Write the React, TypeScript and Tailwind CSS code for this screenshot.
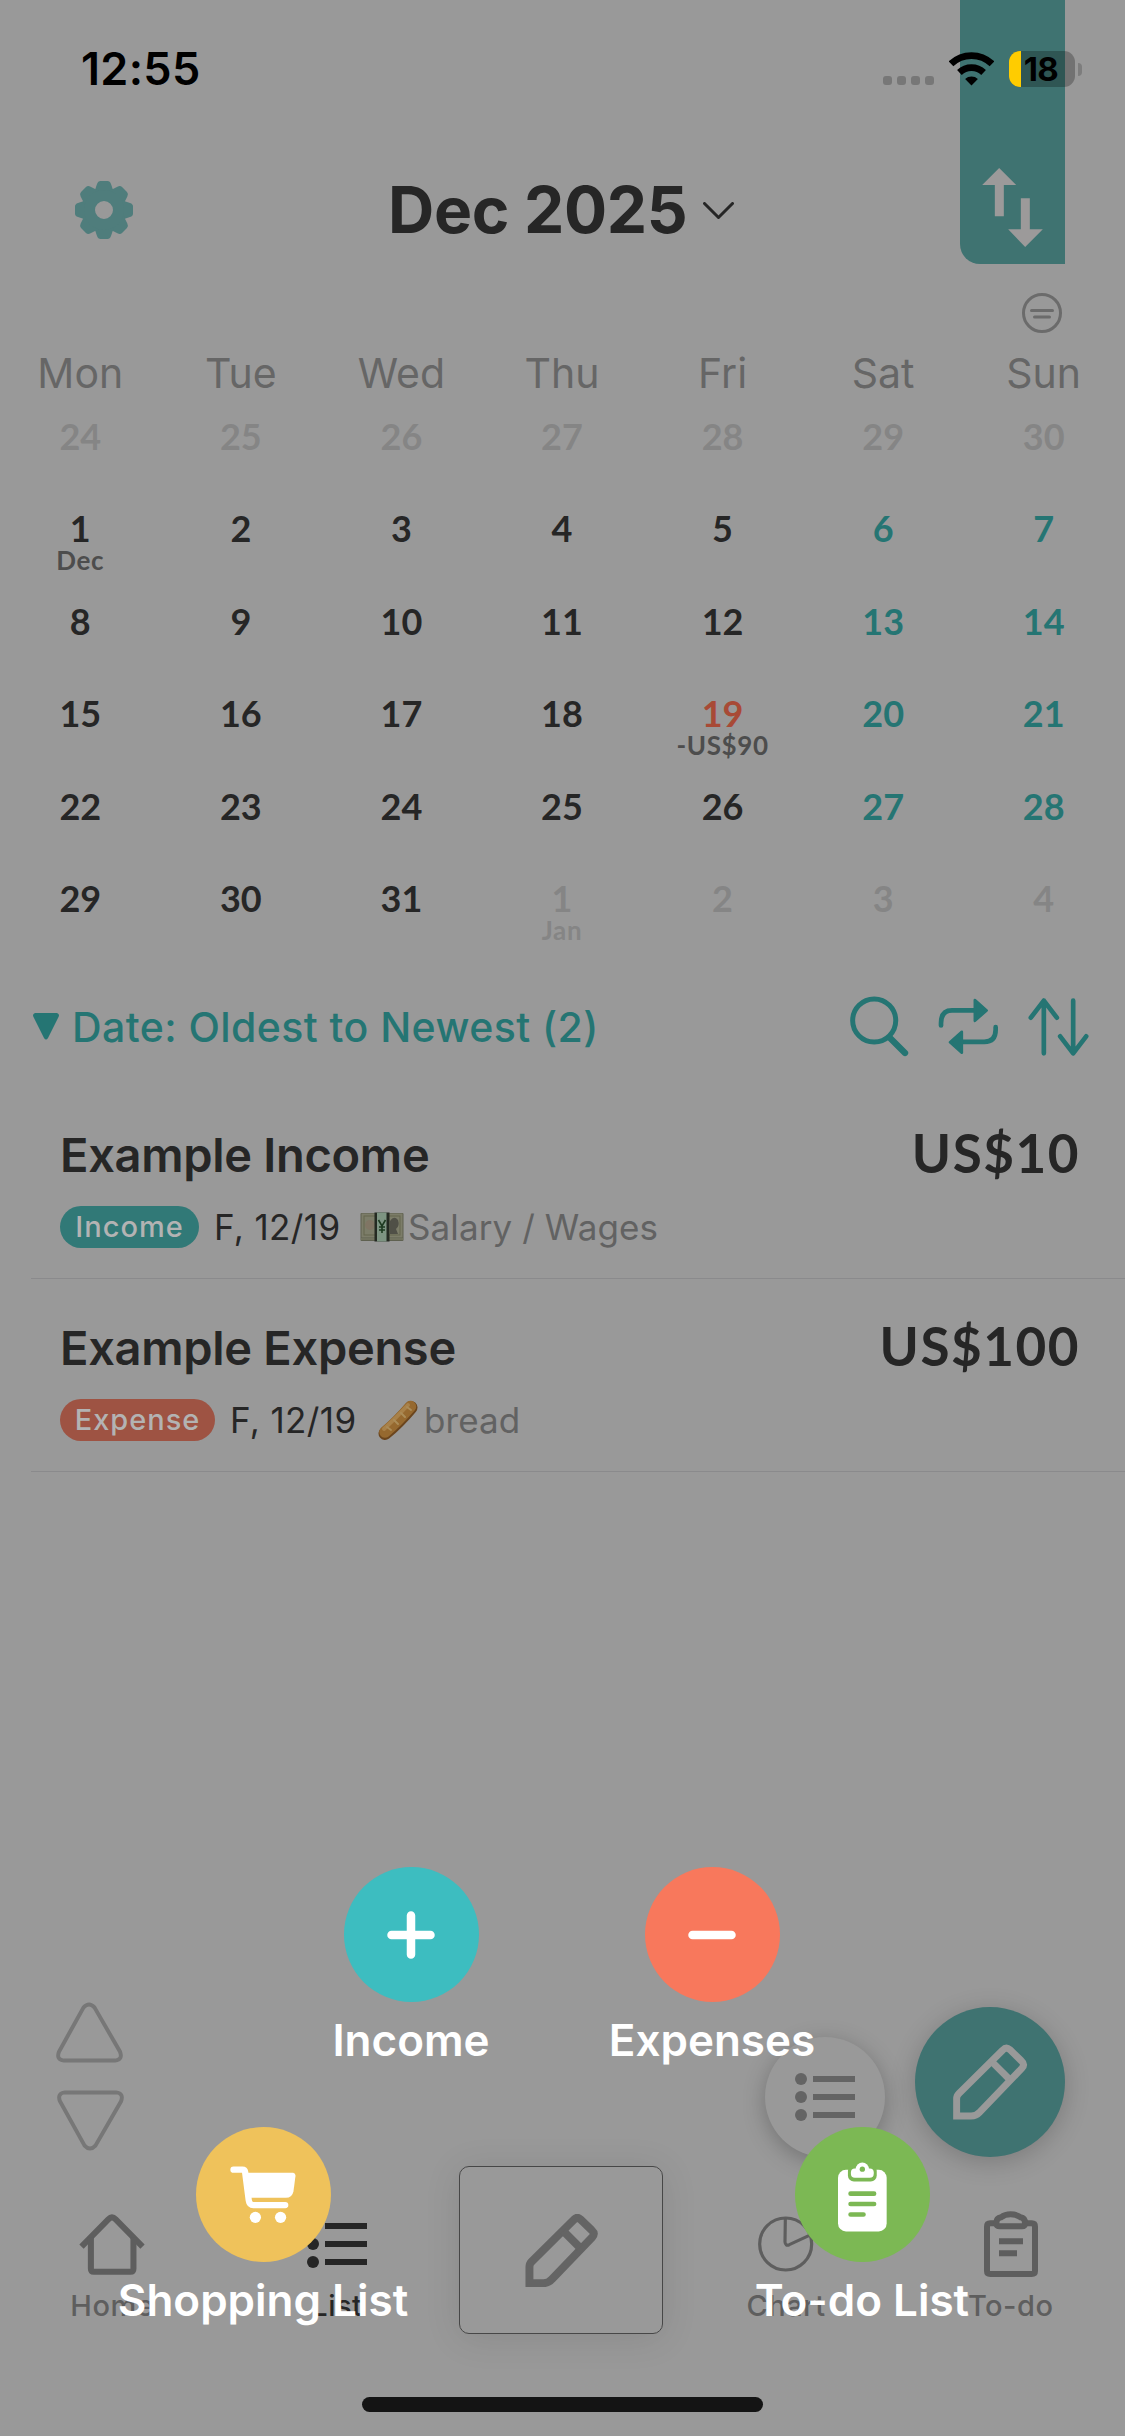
import React from "react";

const weekdays = ["Mon", "Tue", "Wed", "Thu", "Fri", "Sat", "Sun"];

function App() {
  return (
    <div className="relative flex h-[2436px] w-[1125px] flex-col overflow-hidden bg-[#999999] font-[Inter,'Liberation_Sans',sans-serif] text-[#262626]">
      <SwapTab />
      <StatusBar />
      <Header />
      <Calendar />
      <SortBar />
      <div className="flex flex-col pl-[31px]">
        {records.map((record) => (
          <RecordRow key={record.title} record={record} />
        ))}
      </div>
      <div className="flex-1" />
      <TabBar />
      <FloatingButtons />
      <AddMenu />
    </div>
  );
}

function SwapTab() {
  return (
    <div className="absolute left-[960px] top-0 h-[264px] w-[105px] rounded-bl-[20px] bg-[#3f7371] pl-[22px] pt-[168px]">
      <svg width="61" height="79" viewBox="487 503 182 237" fill="#9c9a9a">
        <path d="M538 503L589 554H552V648H525V554H487Z" />
        <path d="M603 594H630V687H669L616 740L565 687H603Z" />
      </svg>
    </div>
  );
}

function StatusBar() {
  return (
    <div className="relative flex h-[140px] shrink-0 justify-between pl-[81px] pr-[43px] text-black">
      <div className="pt-[39px] text-[45px] font-semibold leading-[60px] tracking-[0.3px]">
        12:55
      </div>
      <div className="flex pt-[51px]">
        <div className="mr-[15px] flex gap-[5px] pt-[25px]">
          <div className="h-[9px] w-[9px] rounded-[3px] bg-[#777777]" />
          <div className="h-[9px] w-[9px] rounded-[3px] bg-[#777777]" />
          <div className="h-[9px] w-[9px] rounded-[3px] bg-[#777777]" />
          <div className="h-[9px] w-[9px] rounded-[3px] bg-[#777777]" />
        </div>
        <svg
          className="mr-[15px] mt-px"
          width="45"
          height="34"
          viewBox="386 155 134 101"
          fill="none"
          stroke="#000"
          strokeWidth="20"
        >
          <path d="M392 190A88 88 0 0 1 514 190" />
          <path d="M417 216A52 52 0 0 1 489 216" />
          <path d="M453 255L434 235A28 28 0 0 1 472 235Z" fill="#000" stroke="none" />
        </svg>
        <div className="flex h-[36px] w-[66px] rounded-[11px] bg-black/25">
          <div className="w-[12px] rounded-l-[11px] bg-[#ffcc00]" />
          <div className="w-[40px] text-center text-[33px] font-bold leading-[37px] tracking-[-0.5px]">
            18
          </div>
        </div>
        <div className="ml-[3px] mt-[12px] h-[13px] w-[4px] rounded-r-full bg-[#7d7d7d]" />
      </div>
    </div>
  );
}

function Header() {
  return (
    <>
      <div className="flex h-[138px] shrink-0 items-center pl-[75px] pt-[2px]">
        <svg width="58" height="58" viewBox="-29 -29 58 58" fill="#4f7d7c">
          {[0, 45, 90, 135, 180, 225, 270, 315].map((angle) => (
            <path
              key={angle}
              transform={`rotate(${angle})`}
              d="M-10 -17L-7 -26Q-6 -29 -3.5 -29H3.5Q6 -29 7 -26L10 -17Z"
            />
          ))}
          <path
            fillRule="evenodd"
            d="M0 -20A20 20 0 1 1 0 20A20 20 0 1 1 0 -20ZM0 -9A9 9 0 1 0 0 9A9 9 0 1 0 0 -9Z"
          />
        </svg>
        <div className="ml-[255px] text-[64px] font-bold leading-[72px] tracking-[-0.3px]">
          Dec 2025
        </div>
        <svg
          className="ml-[16px] mt-[2px]"
          width="31"
          height="18"
          viewBox="0 0 31 18"
          fill="none"
          stroke="#262626"
          strokeWidth="3"
          strokeLinecap="round"
          strokeLinejoin="round"
        >
          <path d="M1.5 1.5L15.5 15.5L29.5 1.5" />
        </svg>
      </div>
      <div className="flex h-[70px] shrink-0 items-center justify-end pr-[63px]">
        <svg
          width="40"
          height="40"
          viewBox="0 0 40 40"
          fill="none"
          stroke="#6b6b6b"
          strokeWidth="3"
          strokeLinecap="round"
        >
          <circle cx="20" cy="20" r="18.5" />
          <path d="M9.5 17.5H30.5M12.5 24H27.5" />
        </svg>
      </div>
    </>
  );
}

type Day = { day: number; note?: string; tone?: "faint" | "weekend" | "today" };

const toneClass = {
  normal: "text-[#262626]",
  faint: "text-[#858585]",
  weekend: "text-[#257573]",
  today: "text-[#a84a36]",
};

const days: Day[] = [
  ...[24, 25, 26, 27, 28, 29, 30].map((day) => ({ day, tone: "faint" as const })),
  ...Array.from({ length: 31 }, (_, i): Day => {
    const day = i + 1;
    if (day === 1) return { day, note: "Dec" };
    if (day === 19) return { day, note: "-US$90", tone: "today" };
    return { day, tone: i % 7 > 4 ? "weekend" : undefined };
  }),
  { day: 1, note: "Jan", tone: "faint" },
  { day: 2, tone: "faint" },
  { day: 3, tone: "faint" },
  { day: 4, tone: "faint" },
];

function Calendar() {
  return (
    <div className="shrink-0 pr-px">
      <div className="grid h-[51px] grid-cols-7 text-center text-[41px] leading-[51px] text-[#666666]">
        {weekdays.map((name) => (
          <div key={name}>{name}</div>
        ))}
      </div>
      <div className="grid grid-cols-7 text-center font-[Lato,'Liberation_Sans',sans-serif] font-bold">
        {days.map((d, index) => (
          <div key={index} className="h-[92.6px] pt-[18.5px]">
            <div
              className={`text-[36px] leading-[36px] ${toneClass[d.tone || "normal"]}`}
            >
              {d.day}
            </div>
            {d.note && (
              <div
                className={`text-[26px] leading-[28px] tracking-[0.6px] ${
                  d.tone === "faint" ? "text-[#858585]" : "text-[#4d4d4d]"
                }`}
              >
                {d.note}
              </div>
            )}
          </div>
        ))}
      </div>
    </div>
  );
}

function SortBar() {
  return (
    <div className="flex h-[131px] shrink-0 items-center pl-[33px] pr-[36px] pt-[13px] text-[#257573]">
      <svg width="26" height="27" viewBox="0 0 26 27" fill="currentColor">
        <path d="M2 0H24Q27 1 25.5 4L15 25Q13 28 11 25L0.5 4Q-1 1 2 0Z" />
      </svg>
      <div className="ml-[13px] text-[41px] font-medium leading-[50px] tracking-[0.43px]">
        Date: Oldest to Newest (2)
      </div>
      <div className="ml-auto flex items-center gap-[29px]">
        <svg width="59" height="61" viewBox="745 106 176 184" fill="none" stroke="currentColor">
          <circle cx="817" cy="180" r="65" strokeWidth="15" />
          <path d="M864 232L910 278" strokeWidth="19" strokeLinecap="round" />
        </svg>
        <svg
          width="61"
          height="57"
          viewBox="1010 115 182 170"
          fill="none"
          stroke="currentColor"
          strokeLinecap="round"
          strokeLinejoin="round"
        >
          <path d="M1019 197V190Q1019 152 1052 152H1118M1182 202V210Q1182 246 1148 246H1084" strokeWidth="14" />
          <path d="M1120 121L1155 152L1120 183ZM1081 216L1046 247L1081 278Z" fill="currentColor" strokeWidth="8" />
        </svg>
        <svg
          width="61"
          height="58"
          viewBox="1280 114 182 174"
          fill="none"
          stroke="currentColor"
          strokeWidth="14"
          strokeLinecap="round"
          strokeLinejoin="round"
        >
          <path d="M1327 122V280M1288 173L1327 122L1366 173" />
          <path d="M1415 122V280M1376 229L1415 280L1454 229" />
        </svg>
      </div>
    </div>
  );
}

const records = [
  {
    title: "Example Income",
    amount: "US$10",
    kind: "Income",
    badge: "w-[139px] bg-[#317977]",
    date: "F, 12/19",
    category: "Salary / Wages",
    icon: <MoneyIcon />,
  },
  {
    title: "Example Expense",
    amount: "US$100",
    kind: "Expense",
    badge: "w-[155px] bg-[#9e5343]",
    date: "F, 12/19",
    category: "bread",
    icon: <BreadIcon />,
  },
];

function RecordRow({ record }: { record: (typeof records)[0] }) {
  return (
    <div className="flex h-[193px] justify-between border-b border-[#8a8a8c] pl-[29px] pr-[45px] pt-[45px]">
      <div>
        <div className="text-[47px] font-semibold leading-[48px] tracking-[-0.3px]">
          {record.title}
        </div>
        <div className="mt-[27px] flex h-[42px] items-center">
          <div
            className={`h-[42px] rounded-full text-center text-[29px] font-medium leading-[42px] tracking-[1px] text-[#b3b3b3] ${record.badge}`}
          >
            {record.kind}
          </div>
          <div className="ml-[15px] w-[146px] whitespace-nowrap text-[35px] leading-[42px] tracking-[0.4px]">
            {record.date}
          </div>
          {record.icon}
          <div className="ml-[4px] whitespace-nowrap text-[35px] leading-[42px] tracking-[0.1px] text-[#626262]">
            {record.category}
          </div>
        </div>
      </div>
      <div className="font-[Lato,'Liberation_Sans',sans-serif] text-[53px] font-bold leading-[43px] tracking-[1.5px]">
        {record.amount}
      </div>
    </div>
  );
}

function MoneyIcon() {
  return (
    <svg width="44" height="30" viewBox="0 0 44 30">
      <rect x="0.5" y="1" width="43" height="28" rx="1" fill="#5f6150" />
      <rect x="1.5" y="1.5" width="41" height="24" fill="#7c7d69" />
      <rect x="4" y="4" width="36" height="19" fill="none" stroke="#64664f" strokeWidth="1" />
      <circle cx="10" cy="13" r="5" fill="#807564" />
      <path d="M30 22V9Q34 3 38 8Q40 14 36 17L38 22Z" fill="#505047" />
      <path d="M1 27H43" stroke="#85866f" strokeWidth="1" />
      <rect x="14.5" y="0.5" width="15" height="29" fill="#242a22" />
      <rect x="17" y="0.5" width="9.5" height="29" fill="#7d9482" />
      <path d="M18.5 8L22 14L25.5 8M22 14V21M19 15H25M19 18H25" stroke="#1d3a20" strokeWidth="1.6" fill="none" />
    </svg>
  );
}

function BreadIcon() {
  return (
    <svg width="44" height="42" viewBox="0 0 44 42" fill="none" strokeLinecap="round">
      <path d="M9 34.500Q22 24 35 8.500" stroke="#6b451d" strokeWidth="13" />
      <path d="M9 33Q21 23 34.500 7.500" stroke="#96692f" strokeWidth="11.500" />
      <path d="M8 30Q20 19 32 6" stroke="#a88149" strokeWidth="4" />
      <path d="M11 28L15 31M18 21L22 25M25 14L29 18M31 8L35 11" stroke="#ab8c58" strokeWidth="2" />
    </svg>
  );
}

function ListIcon() {
  return (
    <svg width="60" height="48" viewBox="0 0 60 48" fill="currentColor">
      <circle cx="6" cy="6" r="6" />
      <circle cx="6" cy="24" r="6" />
      <circle cx="6" cy="42" r="6" />
      <path d="M18 3H60V9H18ZM18 21H60V27H18ZM18 39H60V45H18Z" />
    </svg>
  );
}

function PencilIcon({ size, stroke }: { size: number; stroke: number }) {
  return (
    <svg
      width={size}
      height={size}
      viewBox="636 191 228 230"
      fill="none"
      stroke="currentColor"
      strokeWidth={stroke}
    >
      <path d="M649 409V357Q649 348 656 341L788 210Q799 198 810 208L845 242Q857 253 846 265L719 397Q708 409 693 409Z" />
      <path d="M756 245L808 297" />
    </svg>
  );
}

function TabBar() {
  return (
    <div className="shrink-0">
      <div className="flex h-[231px] pr-[2px] text-[#5e5e5e]">
        <TabItem label="Home">
          <svg width="66" height="61" viewBox="117 281 196 182" fill="none" stroke="currentColor" strokeWidth="18">
            <path d="M124 378L204 297Q215 286 226 297L306 378" />
            <path d="M152 350V444Q152 453 161 453H270Q279 453 279 444V350" />
          </svg>
        </TabItem>
        <div className="flex flex-1 text-[#262626]">
          <TabItem label="List">
            <ListIcon />
          </TabItem>
        </div>
        <div className="flex-1">
          <div className="mx-auto flex h-[168px] w-[204px] items-center justify-center rounded-[10px] border-[1.5px] border-[#474747] text-[#646464] shadow-[0_4px_36px_rgba(0,0,0,0.1)]">
            <PencilIcon size={73} stroke={25} />
          </div>
        </div>
        <TabItem label="Chart">
          <svg width="56" height="56" viewBox="59 706 168 168" fill="none" stroke="currentColor" strokeWidth="9.5">
            <circle cx="142" cy="790" r="78" />
            <path d="M141 714L140 784Q141 797 153 792L218 762" />
          </svg>
        </TabItem>
        <TabItem label="To-do">
          <svg width="54" height="66" viewBox="735 692 162 198" fill="none" stroke="currentColor" strokeWidth="18">
            <path d="M774 729H754Q744 729 744 739V872Q744 881 754 881H878Q888 881 888 872V739Q888 729 878 729H856" />
            <path d="M783 738H849Q858 738 858 728Q858 713 845 711Q833 702 815 702Q798 702 786 711Q772 713 772 728Q772 738 783 738Z" />
            <path d="M780 783H852M780 819H834" />
          </svg>
        </TabItem>
      </div>
      <div className="mx-auto mb-[24px] h-[15px] w-[401px] rounded-full bg-[#141414]" />
    </div>
  );
}

function TabItem({ label, children }: { label: string; children: React.ReactNode }) {
  return (
    <div className="flex flex-1 flex-col items-center">
      <div className="flex h-[124px] items-center pt-[32px]">{children}</div>
      <div className="text-[29px] font-medium leading-[32px] tracking-[0.5px]">
        {label}
      </div>
    </div>
  );
}

function FloatingButtons() {
  return (
    <>
      <div className="absolute left-[56px] top-[2002px] flex flex-col gap-[27px]">
        <svg width="67" height="61" viewBox="0 0 68 61" fill="none" stroke="#777777" strokeWidth="4">
          <path d="M28 5Q33.5 -1 39 5L65 50Q68 58 60 59H8Q0 58 3 50Z" />
        </svg>
        <svg className="ml-px" width="67" height="61" viewBox="0 0 68 61" fill="none" stroke="#777777" strokeWidth="4">
          <path d="M28 56Q33.5 62 39 56L65 11Q68 3 60 2H8Q0 3 3 11Z" />
        </svg>
      </div>
      <div className="absolute left-[765px] top-[2037px] flex h-[120px] w-[120px] items-center justify-center rounded-full bg-[#999999] text-[#646464] shadow-[0_5px_22px_rgba(0,0,0,0.25)]">
        <ListIcon />
      </div>
      <div className="absolute left-[915px] top-[2007px] flex h-[150px] w-[150px] items-center justify-center rounded-full bg-[#3f7371] text-[#999999] shadow-[0_5px_26px_rgba(0,0,0,0.2)]">
        <PencilIcon size={76} stroke={21} />
      </div>
    </>
  );
}

function AddMenu() {
  return (
    <>
      <MenuItem label="Income" place="left-[261px] top-[1867px]" color="bg-[#3dbdc0]">
        <svg width="48" height="48" viewBox="0 0 48 48" stroke="#fff" strokeWidth="8.5" strokeLinecap="round">
          <path d="M24 4.5V43.5M4.5 24H43.5" />
        </svg>
      </MenuItem>
      <MenuItem label="Expenses" place="left-[562px] top-[1867px]" color="bg-[#f8785c]">
        <svg width="48" height="48" viewBox="0 0 48 48" stroke="#fff" strokeWidth="8.5" strokeLinecap="round">
          <path d="M4.5 24H43.5" />
        </svg>
      </MenuItem>
      <MenuItem label="Shopping List" place="left-[113px] top-[2127px]" color="bg-[#efc25b]">
        <svg width="66" height="57" viewBox="570 138 198 172" fill="#fff">
          <path
            d="M580 149H607Q614 149 615 156L626 242Q628 256 640 256H736"
            fill="none"
            stroke="#fff"
            strokeWidth="19"
            strokeLinecap="round"
          />
          <path d="M610 158H760Q768 160 767 168L761 214Q757 234 738 234H624Z" />
          <circle cx="646" cy="293" r="17" />
          <circle cx="722" cy="293" r="17" />
        </svg>
      </MenuItem>
      <MenuItem label="To-do List" place="left-[712px] top-[2127px]" color="bg-[#7cb854]">
        <svg className="mt-[4px]" width="49" height="70" viewBox="294 544 148 210" fill="#fff">
          <rect x="294" y="567" width="147" height="186" rx="24" />
          <rect x="324" y="552" width="87" height="50" rx="18" fill="#7cb854" />
          <rect x="333" y="563" width="69" height="28" rx="12" />
          <circle cx="367.5" cy="565" r="20" />
          <circle cx="367.5" cy="565" r="8" fill="#7cb854" />
          <path
            d="M332 639H403M332 670H403M332 702H371"
            stroke="#7cb854"
            strokeWidth="14"
            strokeLinecap="round"
          />
        </svg>
      </MenuItem>
    </>
  );
}

function MenuItem({
  label,
  place,
  color,
  children,
}: {
  label: string;
  place: string;
  color: string;
  children: React.ReactNode;
}) {
  return (
    <div className={`absolute flex w-[300px] flex-col items-center ${place}`}>
      <div className={`flex h-[135px] w-[135px] items-center justify-center rounded-full ${color}`}>
        {children}
      </div>
      <div className="mt-[13px] whitespace-nowrap text-[44px] font-semibold leading-[50px] text-white">
        {label}
      </div>
    </div>
  );
}

export default App;
